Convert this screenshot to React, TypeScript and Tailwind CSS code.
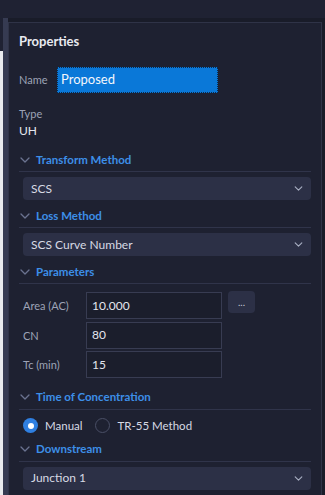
const font = { fontFamily: 'Lato, "Noto Sans", sans-serif' }

function Chevron({ className }: { className: string }) {
	return (
		<svg viewBox="0 0 10 6" className={className} fill="none" stroke="currentColor" strokeWidth={1.3} strokeLinecap="round" strokeLinejoin="round">
			<polyline points="1,1 5,5 9,1" />
		</svg>
	)
}

function Section({ title }: { title: string }) {
	return (
		<div className="flex items-center gap-[6px] pl-[1px] h-[24px] border-b border-[#30344a] mb-[5px]">
			<Chevron className="w-[10px] h-[6px] text-[#6b7390]" />
			<span className="text-[11.5px] font-bold text-[#3d8fe8]">{title}</span>
		</div>
	)
}

function Select({ value }: { value: string }) {
	return (
		<div className="ml-[4px] h-[23px] rounded-[4px] bg-[#2c3046] flex items-center justify-between pl-[8px] pr-[8px] mb-[4px]">
			<span className="text-[12px] text-[#d7dae4]">{value}</span>
			<Chevron className="w-[9px] h-[5px] text-[#aab0c4]" />
		</div>
	)
}

function Field({ label, value, button }: { label: string; value: string; button?: boolean }) {
	return (
		<div className="flex items-start h-[29.5px] pl-[4px]">
			<span className="w-[63px] text-[11px] text-[#9da3b6] leading-[27px]">{label}</span>
			<div className="w-[136px] h-[27px] border border-[#383c52] bg-[#1b1e2c] flex items-center pl-[5px] text-[12px] text-[#e3e6ee]">
				{value}
			</div>
			{button && (
				<div className="ml-[6px] mt-[-1px] w-[27px] h-[22px] rounded-[4px] bg-[#2c3046] text-[#c4c8d6] text-[10px] flex items-center justify-center">
					...
				</div>
			)}
		</div>
	)
}

export default function App() {
	return (
		<div style={font} className="w-[325px] h-[495px] bg-[#1f2233] overflow-hidden flex flex-col">
			<div className="h-[18px] shrink-0 bg-[#1f2233]" />
			<div className="flex flex-1 min-h-0">
				<div className="w-[3px] flex flex-col">
					<div className="h-[33px] bg-[#1f2233]" />
					<div className="flex-1 bg-[#e9ebee]" />
				</div>
				<div className="w-[5px] bg-[#363b52]" />
				<div className="flex-1 flex flex-col bg-[#191c29] pt-[4px] pr-[3px]">
					<div className="flex-1 border border-[#2f3347] border-b-0 bg-[#1e2131] pl-[10px] pr-[10px] pt-[8px]">
						<div className="text-[13px] font-bold text-[#e8eaf0] h-[20px] leading-[20px]">Properties</div>
						<div className="flex items-center mt-[16px] h-[26px]">
							<span className="w-[38px] text-[11px] text-[#9da3b6]">Name</span>
							<div className="w-[161px] h-[26px] bg-[#0a78d8] border border-dotted border-[#0d2a4a] flex items-center pl-[3px] text-[13px] text-[#f2f6fc]">
								Proposed
							</div>
						</div>
						<div className="mt-[12px] text-[11px] text-[#9da3b6] leading-[17px]">Type</div>
						<div className="text-[12px] text-[#e3e6ee] leading-[17px]">UH</div>
						<div className="mt-[9px]">
							<Section title="Transform Method" />
							<Select value="SCS" />
							<Section title="Loss Method" />
							<Select value="SCS Curve Number" />
							<Section title="Parameters" />
							<div className="pt-[3px]">
								<Field label="Area (AC)" value="10.000" button />
								<Field label="CN" value="80" />
								<Field label="Tc (min)" value="15" />
							</div>
							<div className="mt-[5px]">
								<Section title="Time of Concentration" />
							</div>
							<div className="flex items-center h-[24px] pl-[4px] -mt-[1px]">
								<span className="w-[15px] h-[15px] rounded-full bg-[#2f7fe0] flex items-center justify-center">
									<span className="w-[6px] h-[6px] rounded-full bg-white" />
								</span>
								<span className="ml-[7px] text-[11.5px] text-[#d7dae4]">Manual</span>
								<span className="ml-[13px] w-[15px] h-[15px] rounded-full border border-[#4a4f66] bg-[#1e2131]" />
								<span className="ml-[7px] text-[11.5px] text-[#d7dae4]">TR-55 Method</span>
							</div>
							<Section title="Downstream" />
							<Select value="Junction 1" />
						</div>
					</div>
				</div>
			</div>
		</div>
	)
}
